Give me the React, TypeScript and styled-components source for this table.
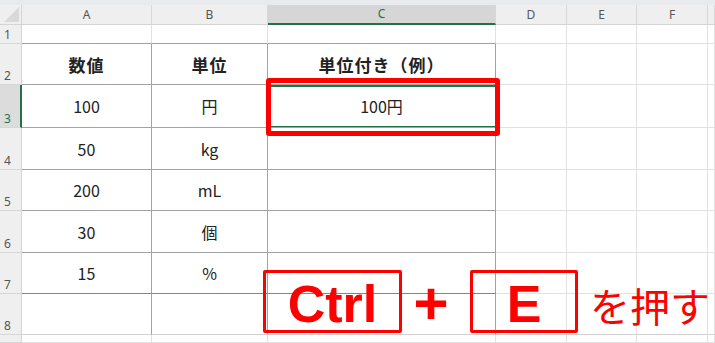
import React from 'react';
import styled, { createGlobalStyle, css } from 'styled-components';

const GlobalStyle = createGlobalStyle`
  html, body {
    margin: 0;
    padding: 0;
    background: #ffffff;
    overflow: hidden;
  }
  * {
    box-sizing: border-box;
  }
`;

const GRID_LINE = '#e1e1e1';
const TABLE_LINE = '#a3a3a3';
const EXCEL_GREEN = '#217346';
const RED = '#ff0000';

const COLUMNS = ['A', 'B', 'C', 'D', 'E', 'F', ''];
const COLUMN_WIDTHS = '22px 130px 116px 228px 71px 70px 71px 1fr';
const ROW_HEIGHTS = [19, 41, 43, 42, 41, 42, 41, 41, 8];

const DATA: string[][] = [
  ['', '', ''],
  ['数値', '単位', '単位付き（例）'],
  ['100', '円', '100円'],
  ['50', 'kg', ''],
  ['200', 'mL', ''],
  ['30', '個', ''],
  ['15', '%', ''],
  ['', '', ''],
  ['', '', ''],
];

const Page = styled.div`
  width: 715px;
  height: 343px;
  display: flex;
  flex-direction: column;
  overflow: hidden;
`;

const TopStrip = styled.div`
  height: 5px;
  background: #e8eaed;
  flex-shrink: 0;
`;

const Sheet = styled.div`
  position: relative;
  display: grid;
  grid-template-columns: ${COLUMN_WIDTHS};
  grid-template-rows: 20px ${ROW_HEIGHTS.map((h) => `${h}px`).join(' ')};
`;

const Corner = styled.div`
  background: #efefef;
  border-right: 1px solid #d4d4d4;
  border-bottom: 1px solid #d4d4d4;
  display: flex;
  align-items: flex-end;
  justify-content: flex-end;
  padding: 0 2px 2px 0;
`;

const CornerTriangle = styled.div`
  width: 0;
  height: 0;
  border-left: 15px solid transparent;
  border-bottom: 15px solid #d9d9d9;
`;

const ColumnHeader = styled.div<{ $active?: boolean }>`
  background: ${(p) => (p.$active ? '#d6d6d6' : '#efefef')};
  border-right: 1px solid #d8d8d8;
  border-bottom: ${(p) => (p.$active ? `2px solid ${EXCEL_GREEN}` : '1px solid #d4d4d4')};
  display: flex;
  align-items: center;
  justify-content: center;
  font-family: 'Noto Sans', 'Open Sans', sans-serif;
  font-size: 12px;
  color: ${(p) => (p.$active ? EXCEL_GREEN : '#555555')};
  padding-bottom: 1px;
`;

const RowHeader = styled.div<{ $active?: boolean }>`
  background: ${(p) => (p.$active ? '#dcdcdc' : '#efefef')};
  border-right: ${(p) => (p.$active ? `2px solid ${EXCEL_GREEN}` : '1px solid #d4d4d4')};
  border-bottom: 1px solid #d6d6d6;
  display: flex;
  align-items: flex-end;
  padding: 0 0 1px 4px;
  font-family: 'Noto Sans', 'Open Sans', sans-serif;
  font-size: 12px;
  line-height: 14px;
  color: ${(p) => (p.$active ? EXCEL_GREEN : '#555555')};
`;

const Cell = styled.div<{
  $right: string;
  $bottom: string;
  $bold?: boolean;
  $selected?: boolean;
}>`
  border-right: 1px solid ${(p) => p.$right};
  border-bottom: 1px solid ${(p) => p.$bottom};
  display: flex;
  align-items: center;
  justify-content: center;
  font-family: 'Noto Sans CJK JP', 'Noto Sans', sans-serif;
  font-size: ${(p) => (p.$bold ? '17px' : '16px')};
  font-weight: ${(p) => (p.$bold ? 700 : 400)};
  letter-spacing: ${(p) => (p.$bold ? '1px' : '0')};
  color: #222222;
  white-space: nowrap;
  ${(p) =>
    p.$selected &&
    css`
      box-shadow: inset 0 2px 0 ${EXCEL_GREEN}, inset 0 -1px 0 ${EXCEL_GREEN};
    `}
`;

const Highlight = styled.div`
  position: absolute;
  left: 266px;
  top: 73px;
  width: 234px;
  height: 58px;
  border: 5px solid ${RED};
  border-radius: 3px;
  pointer-events: none;
`;

const Shortcut = styled.div`
  position: absolute;
  left: 263px;
  top: 263px;
  display: flex;
  align-items: center;
  color: ${RED};
`;

const KeyBox = styled.div<{ $width: number }>`
  width: ${(p) => p.$width}px;
  height: 63px;
  border: 3px solid ${RED};
  border-radius: 2px;
  display: flex;
  align-items: center;
  justify-content: center;
  padding-top: 5px;
  font-family: 'Liberation Sans', Arial, sans-serif;
  font-weight: 700;
  font-size: 52px;
  line-height: 1;
`;

const Plus = styled.div`
  width: 68px;
  padding-right: 10px;
  padding-top: 6px;
  text-align: center;
  font-family: 'Liberation Sans', Arial, sans-serif;
  font-weight: 700;
  font-size: 60px;
  line-height: 1;
`;

const Caption = styled.div`
  margin-left: 12px;
  padding-top: 8px;
  font-family: 'Noto Sans CJK JP', 'Noto Sans', sans-serif;
  font-size: 40px;
  line-height: 1;
  white-space: nowrap;
`;

function cellLines(row: number, col: number) {
  // row: 1-based sheet row, col: 0 = A
  const inTable = row >= 2 && row <= 8 && col <= 2;
  let right = GRID_LINE;
  let bottom = GRID_LINE;
  if (inTable) {
    right = TABLE_LINE;
    bottom = row === 7 ? '#858585' : row === 8 ? '#d2d2d2' : TABLE_LINE;
  }
  if (row === 1 && col <= 2) bottom = TABLE_LINE;
  if (row === 8 && col > 2) bottom = '#d2d2d2';
  return { right, bottom };
}

export default function App() {
  return (
    <>
      <GlobalStyle />
      <Page>
        <TopStrip />
        <Sheet>
          <Corner>
            <CornerTriangle />
          </Corner>
          {COLUMNS.map((c, i) => (
            <ColumnHeader key={`h${i}`} $active={c === 'C'}>
              {c}
            </ColumnHeader>
          ))}

          {DATA.map((values, r) => {
            const row = r + 1;
            return (
              <React.Fragment key={row}>
                <RowHeader $active={row === 3}>{row <= 8 ? row : ''}</RowHeader>
                {COLUMNS.map((_, col) => {
                  const { right, bottom } = cellLines(row, col);
                  return (
                    <Cell
                      key={col}
                      $right={right}
                      $bottom={bottom}
                      $bold={row === 2}
                      $selected={row === 3 && col === 2}
                    >
                      {values[col] ?? ''}
                    </Cell>
                  );
                })}
              </React.Fragment>
            );
          })}

          <Highlight />
          <Shortcut>
            <KeyBox $width={139}>Ctrl</KeyBox>
            <Plus>+</Plus>
            <KeyBox $width={108}>E</KeyBox>
            <Caption>を押す</Caption>
          </Shortcut>
        </Sheet>
      </Page>
    </>
  );
}
